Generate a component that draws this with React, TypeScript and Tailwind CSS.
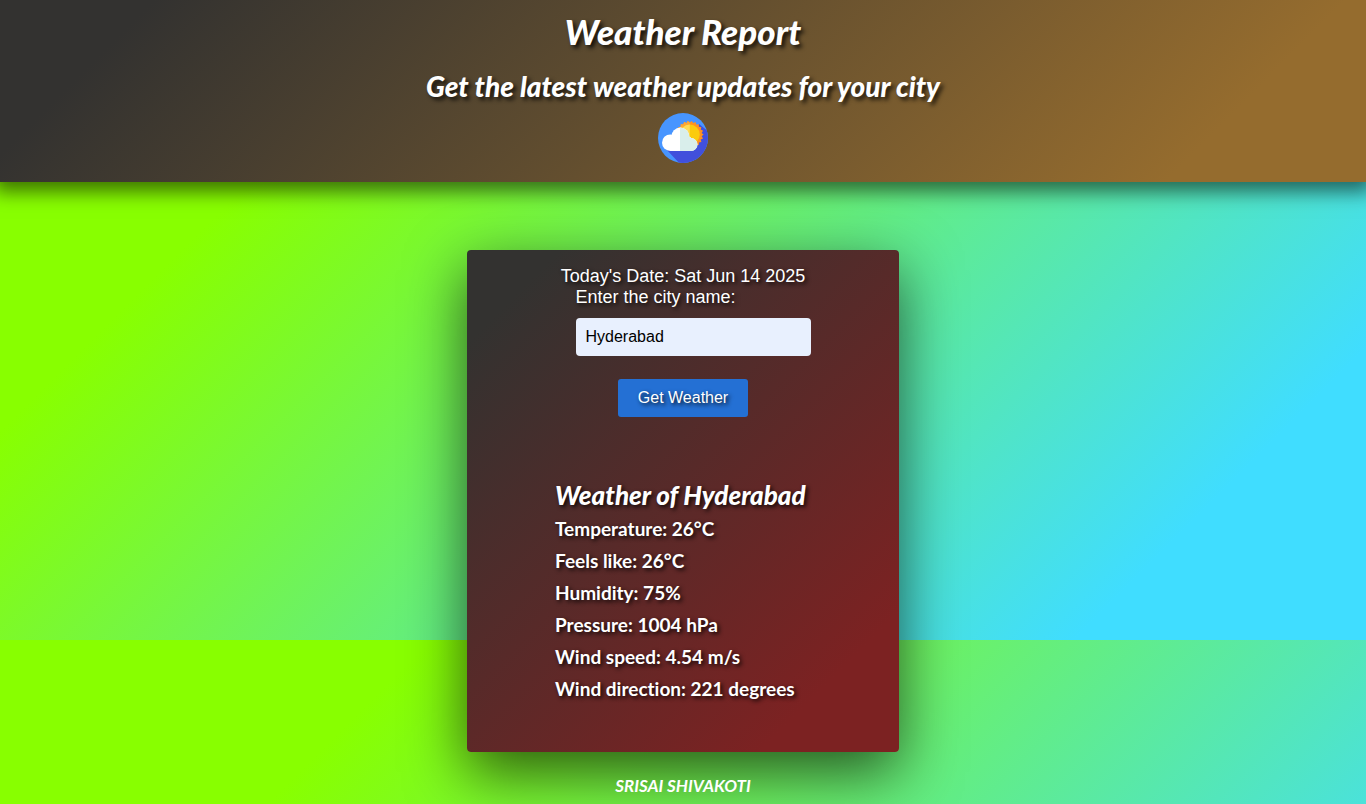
import { useState } from "react";

const readings = [
  "Temperature: 26°C",
  "Feels like: 26°C",
  "Humidity: 75%",
  "Pressure: 1004 hPa",
  "Wind speed: 4.54 m/s",
  "Wind direction: 221 degrees",
];

function CloudShape({ fill }: { fill: string }) {
  return (
    <g fill={fill}>
      <circle cx="12.300" cy="29.700" r="8.300" />
      <circle cx="22.300" cy="23.600" r="9" />
      <circle cx="33" cy="31.500" r="6.500" />
      <rect x="12.300" y="24" width="20.700" height="14" />
    </g>
  );
}

function WeatherIcon() {
  const rays = Array.from({ length: 44 }, (_, i) => {
    const a = (i * Math.PI) / 22;
    const r = i % 2 ? 12 : 13.8;
    return `${(31.8 + r * Math.cos(a)).toFixed(2)},${(21.6 + r * Math.sin(a)).toFixed(2)}`;
  }).join(" ");
  return (
    <svg viewBox="0 0 50 50" className="size-[50px]" role="img" aria-label="Partly cloudy">
      <defs>
        <clipPath id="disc">
          <circle cx="25" cy="25" r="25" />
        </clipPath>
        <clipPath id="rightHalf">
          <rect x="22" width="28" height="50" />
        </clipPath>
        <clipPath id="leftSun">
          <rect width="31.800" height="50" />
        </clipPath>
      </defs>
      <g clipPath="url(#disc)">
        <rect width="50" height="50" fill="#4795ff" />
        <path d="M8 36 L23 52 H52 V20 L41 11 L30 30 Z" fill="#4150dc" />
      </g>
      <polygon points={rays} fill="#ff9220" />
      <polygon points={rays} fill="#ffa733" clipPath="url(#leftSun)" />
      <circle cx="31.800" cy="21.600" r="10" fill="#fbcb0e" />
      <circle cx="31.800" cy="21.600" r="10" fill="#ffdb56" clipPath="url(#leftSun)" />
      <CloudShape fill="#fff" />
      <g clipPath="url(#rightHalf)">
        <CloudShape fill="#d9eeeb" />
      </g>
    </svg>
  );
}

export default function App() {
  const [city, setCity] = useState("Hyderabad");
  return (
    <div className="flex flex-col items-center bg-[linear-gradient(135deg,#88ff00_21.5%,#40ddff_85.5%)] bg-[length:100%_640px] font-['Liberation_Sans',sans-serif] text-lg/[21px] text-white">
      <header className="flex w-full flex-col items-center bg-[linear-gradient(135deg,#333230_10%,#956c2e_87%)] pt-1.5 pb-[19px] font-['Lato',sans-serif] font-black italic shadow-[0_4px_18px_6px_rgba(0,0,0,0.54)] [text-shadow:3px_3px_4px_rgba(0,0,0,0.8)]">
        <h1 className="text-[35px]/[50px]">Weather Report</h1>
        <h2 className="mt-2.5 mb-[7px] text-[28px]/[40px]">Get the latest weather updates for your city</h2>
        <WeatherIcon />
      </header>

      <main className="mt-[68px] flex w-[432px] max-w-full flex-col items-center rounded-[4px] bg-[linear-gradient(135deg,#333230_10%,#7c2222_85%)] pt-4 pb-[47px] shadow-[0_20px_60px_rgba(0,0,0,0.65)] [text-shadow:2px_2px_4px_rgba(0,0,0,0.9)]">
        <p>Today's Date: Sat Jun 14 2025</p>
        <form className="flex flex-col items-center" onSubmit={(e) => e.preventDefault()}>
          <div className="ml-5 flex flex-col">
            <label htmlFor="city">Enter the city name:</label>
            <input
              id="city"
              value={city}
              onChange={(e) => setCity(e.target.value)}
              className="mt-2.5 h-[38px] w-[235px] rounded-[4px] bg-[#e8f0fe] px-2.5 text-base text-black outline-none [text-shadow:none]"
            />
          </div>
          <button
            type="submit"
            className="mt-[23px] h-[38px] rounded-[3px] bg-[#2470d4] px-5 text-base [text-shadow:2px_2px_4px_rgba(0,0,0,0.9)]"
          >
            Get Weather
          </button>
        </form>
        <section className="mt-[60px] w-64 max-w-full font-['Lato',sans-serif] font-bold [font-variant-ligatures:none]">
          <h2 className="text-[26px]/9 font-black italic">Weather of Hyderabad</h2>
          <ul className="text-[19px]/8">
            {readings.map((r) => (
              <li key={r}>{r}</li>
            ))}
          </ul>
        </section>
      </main>

      <footer className="pt-5 pb-1 font-['Lato',sans-serif] text-[17px]/7 font-bold italic">SRISAI SHIVAKOTI</footer>
    </div>
  );
}
